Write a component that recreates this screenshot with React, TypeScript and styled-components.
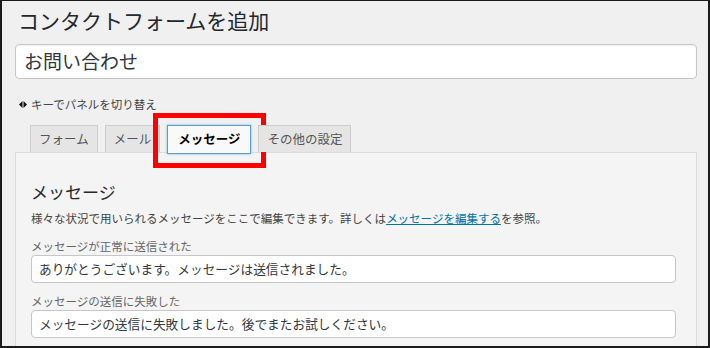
import React from 'react'
import styled, { createGlobalStyle } from 'styled-components'

const GlobalStyle = createGlobalStyle`
	html, body {
		margin: 0;
		padding: 0;
		background: #f0f0f0;
	}
	body {
		font-family: "Noto Sans CJK JP", "Noto Sans", sans-serif;
	}
`

const Frame = styled.div`
	width: 710px;
	height: 348px;
	box-sizing: border-box;
	border: 2px solid #1b1b1b;
	border-top-width: 1px;
	background: #f0f0f0;
	overflow: hidden;
	padding: 0 11px 0 13px;
`

const Title = styled.h1`
	margin: 0;
	padding: 2px 0 0 3px;
	font-size: 21px;
	font-weight: 400;
	line-height: 34px;
	color: #23282d;
`

const NameInput = styled.div`
	margin-top: 7px;
	height: 35px;
	box-sizing: border-box;
	border: 1px solid #c6c6c6;
	border-radius: 4px;
	background: #fff;
	box-shadow: inset 0 1px 2px rgba(0, 0, 0, 0.07);
	padding: 0 8px;
	font-size: 19px;
	line-height: 32px;
	color: #32373c;
`

const Hint = styled.p`
	margin: 17px 0 0 4px;
	display: flex;
	align-items: center;
	gap: 4px;
	font-size: 11.5px;
	line-height: 16px;
	color: #444;
`

const TabBar = styled.div`
	display: flex;
	gap: 7px;
	margin: 12px 0 0 15px;
	height: 28px;
	align-items: flex-end;
	position: relative;
	z-index: 1;
`

const Tab = styled.div<{ $active?: boolean }>`
	height: ${(p) => (p.$active ? 29 : 27)}px;
	box-sizing: border-box;
	padding: 0 ${(p) => (p.$active ? 10 : 8)}px;
	border: 1px solid ${(p) => (p.$active ? '#5b9dd9' : '#ccc')};
	border-bottom: ${(p) => (p.$active ? '1px solid #5b9dd9' : 'none')};
	background: ${(p) => (p.$active ? '#f9f9f9' : '#e5e5e5')};
	box-shadow: ${(p) => (p.$active ? '0 0 2px rgba(30, 140, 190, 0.6)' : 'none')};
	margin-bottom: ${(p) => (p.$active ? -2 : 0)}px;
	font-size: 12.5px;
	font-weight: ${(p) => (p.$active ? 700 : 400)};
	line-height: 26px;
	color: ${(p) => (p.$active ? '#000' : '#555')};
	white-space: nowrap;
	position: relative;
`

const Highlight = styled.div`
	position: absolute;
	left: -15px;
	top: -13px;
	width: 113px;
	height: 55px;
	box-sizing: border-box;
	border: 5px solid #f00;
	pointer-events: none;
`

const Panel = styled.div`
	border: 1px solid #dcdcdc;
	background: #f4f4f4;
	padding: 25px 15px 20px;
	height: 220px;
`

const PanelTitle = styled.h2`
	margin: 0;
	font-size: 17px;
	font-weight: 400;
	line-height: 28px;
	color: #23282d;
`

const Description = styled.p`
	margin: 3px 0 0;
	font-size: 11.5px;
	line-height: 18px;
	color: #444;

	a {
		color: #0073aa;
		text-decoration: underline;
	}
`

const Field = styled.div`
	margin-top: 10px;
	display: flex;
	flex-direction: column;
	width: 645px;
	& + & {
		margin-top: 9px;
	}
`

const Label = styled.label`
	font-size: 11.5px;
	line-height: 18px;
	color: #666;
`

const TextBox = styled.div`
	height: 28px;
	box-sizing: border-box;
	border: 1px solid #c6c6c6;
	border-radius: 4px;
	background: #fff;
	padding: 0 7px;
	font-size: 12.7px;
	line-height: 26px;
	color: #32373c;
	white-space: nowrap;
`

const Arrows = () => (
	<svg width='8' height='7' viewBox='0 0 8 7'>
		<path d='M0 3.5 L3.5 0 V7 Z M8 3.5 L4.5 0 V7 Z' fill='#111' />
	</svg>
)

const tabs = ['フォーム', 'メール', 'メッセージ', 'その他の設定']

const App = () => {
	return (
		<Frame>
			<GlobalStyle />
			<Title>コンタクトフォームを追加</Title>
			<NameInput>お問い合わせ</NameInput>
			<Hint>
				<Arrows />
				キーでパネルを切り替え
			</Hint>
			<TabBar>
				{tabs.map((t, i) => (
					<Tab key={t} $active={i === 2}>
						{t}
						{i === 2 && <Highlight />}
					</Tab>
				))}
			</TabBar>
			<Panel>
				<PanelTitle>メッセージ</PanelTitle>
				<Description>
					様々な状況で用いられるメッセージをここで編集できます。詳しくは
					<a href='#'>メッセージを編集する</a>を参照。
				</Description>
				<Field>
					<Label>メッセージが正常に送信された</Label>
					<TextBox>ありがとうございます。メッセージは送信されました。</TextBox>
				</Field>
				<Field>
					<Label>メッセージの送信に失敗した</Label>
					<TextBox>メッセージの送信に失敗しました。後でまたお試しください。</TextBox>
				</Field>
			</Panel>
		</Frame>
	)
}

export default App
